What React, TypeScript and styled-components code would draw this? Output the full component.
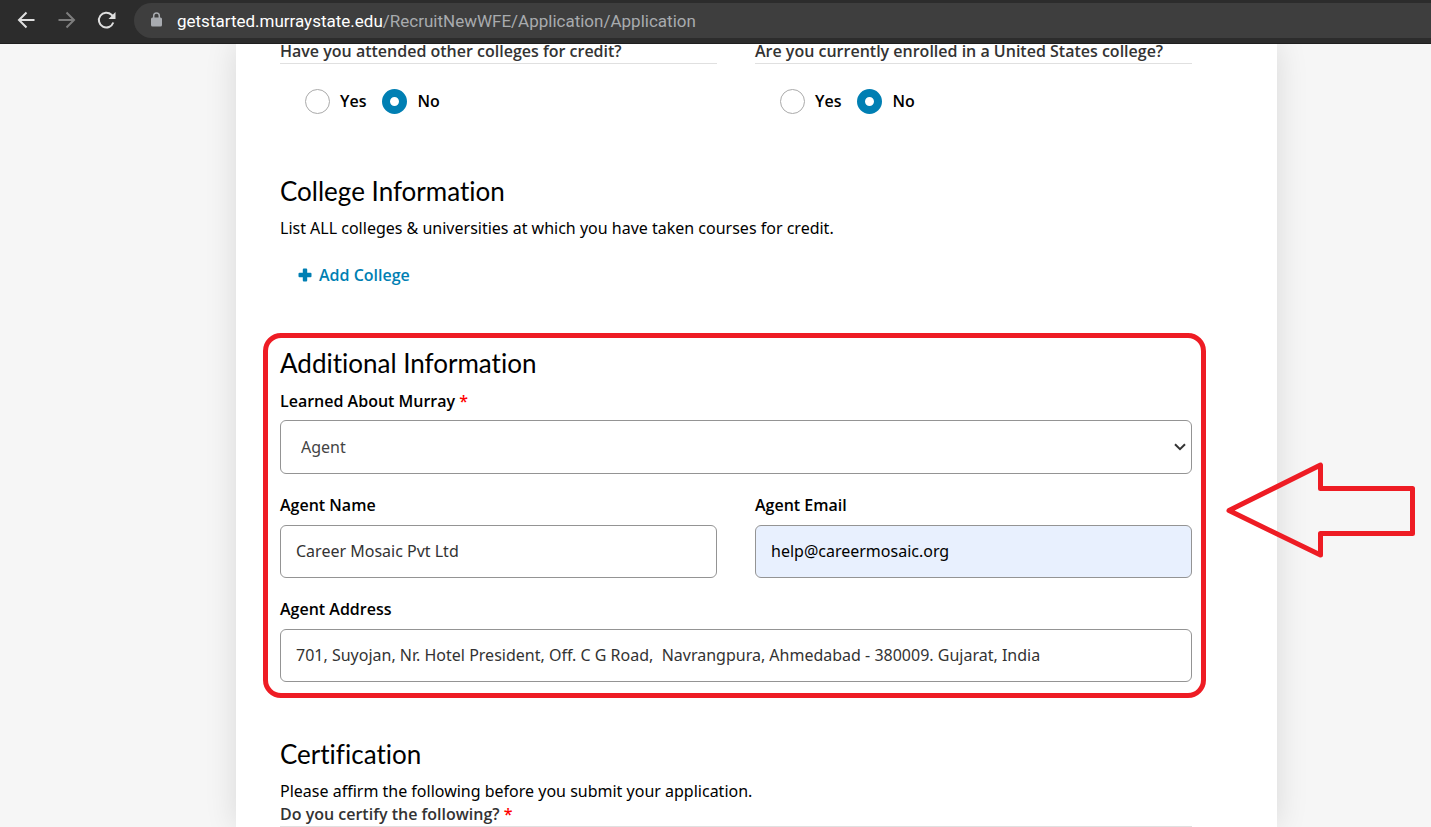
import React, { useState } from "react";
import styled, { createGlobalStyle } from "styled-components";

const GlobalStyle = createGlobalStyle`
  *, *::before, *::after { box-sizing: border-box; }
  body {
    margin: 0;
    background: #f6f6f6;
    color: #000;
    font-family: "Noto Sans", "Open Sans", sans-serif;
    font-size: 16px;
    line-height: 24px;
  }
`;

const labelFont = `
  font-family: "Open Sans", "Noto Sans", sans-serif;
  font-weight: 600;
`;

const Page = styled.div`
  display: flex;
  flex-direction: column;
  min-height: 100vh;
  overflow-x: hidden;
`;

const BrowserBar = styled.header`
  position: sticky;
  top: 0;
  z-index: 2;
  display: flex;
  align-items: center;
  height: 44px;
  padding: 0 0 3px 14px;
  background: #2c2c2c;
  border-bottom: 1px solid #1f1f1f;
`;

const NavButton = styled.button<{ $dim?: boolean }>`
  display: flex;
  align-items: center;
  justify-content: center;
  width: 24px;
  height: 24px;
  margin-right: 16px;
  padding: 0;
  border: 0;
  background: none;
  color: ${(p) => (p.$dim ? "#7d7d7d" : "#dfdfdf")};
`;

const AddressBar = styled.div`
  display: flex;
  flex: 1;
  align-items: center;
  height: 35px;
  padding-left: 16px;
  border-radius: 18px 0 0 18px;
  background: #3e3e3e;
`;

const Address = styled.div`
  margin-left: 14px;
  padding-top: 2px;
  color: #a8abae;
  font-family: Roboto, sans-serif;
  font-size: 17px;
  white-space: nowrap;
`;

const Host = styled.span`
  color: #fff;
`;

const Card = styled.main`
  flex: 1;
  margin: 0 154px 0 236px;
  padding: 0 85px 0 44px;
  background: #fff;
  box-shadow: 0 0 30px rgba(0, 0, 0, 0.12);
`;

const Columns = styled.div`
  display: grid;
  grid-template-columns: 1fr 1fr;
  column-gap: 38px;
`;

const Question = styled.fieldset`
  min-width: 0;
  margin: 0;
  padding: 0;
  border: 0;
`;

const Legend = styled.legend`
  ${labelFont}
  width: 100%;
  padding: 0 0 5px;
  border-bottom: 1px solid #e0e0e0;
  color: #333;
  line-height: 14px;
`;

const Options = styled.div`
  display: flex;
  gap: 16px;
  padding: 25px 0 0 25px;
`;

const Option = styled.label`
  ${labelFont}
  display: flex;
  align-items: flex-start;
  gap: 10px;
`;

const Radio = styled.input`
  appearance: none;
  width: 25px;
  height: 25px;
  margin: 0;
  border: 1px solid #aaa;
  border-radius: 50%;
  background: #fff;

  &:checked {
    border: 8px solid #007fb3;
  }
`;

const Section = styled.section<{ $gap: number }>`
  position: relative;
  margin-top: ${(p) => p.$gap}px;
`;

const Heading = styled.h2`
  margin: 0 0 9px;
  font-family: Lato, "Open Sans", sans-serif;
  font-size: 26px;
  font-variant-ligatures: none;
  font-weight: 400;
  line-height: 32px;
`;

const Text = styled.p`
  margin: 0;

  & + ${Question} {
    margin-top: 4px;
  }
`;

const AddButton = styled.button`
  display: flex;
  align-items: center;
  gap: 7px;
  margin: 23px 0 0 18px;
  padding: 0;
  border: 0;
  background: none;
  color: #007fb3;
  font-size: 16px;
  line-height: 24px;
  ${labelFont}
`;

const Field = styled.div`
  display: flex;
  flex-direction: column;
  margin-top: 19px;

  ${Heading} + & {
    margin-top: 10px;
  }
`;

const Label = styled.label`
  ${labelFont}
  margin-bottom: 7px;
`;

const Required = styled.span`
  color: #f00;
`;

const TextInput = styled.input<{ $filled?: boolean }>`
  width: 100%;
  height: 53px;
  margin: 1px 0 0;
  padding: 0 15px 2px;
  border: 1px solid #949494;
  border-radius: 6px;
  background: ${(p) => (p.$filled ? "#e8f0fe" : "#fff")};
  color: ${(p) => (p.$filled ? "#000" : "#333")};
  font: inherit;
`;

const SelectWrap = styled.div`
  display: grid;
  align-items: center;

  > * {
    grid-area: 1 / 1;
  }

  > svg {
    justify-self: end;
    margin-right: 6px;
    pointer-events: none;
  }
`;

const Select = styled.select`
  appearance: none;
  width: 100%;
  height: 54px;
  padding: 0 20px;
  border: 1px solid #949494;
  border-radius: 6px;
  background: #fff;
  color: #444;
  font: inherit;
`;

const Highlight = styled.div`
  position: absolute;
  inset: -14px -14px -16px -17px;
  border: 5px solid #ee1c24;
  border-radius: 18px;
  pointer-events: none;
`;

const Arrow = styled.svg`
  position: absolute;
  top: 114px;
  left: calc(100% + 33px);
  pointer-events: none;
`;

function YesNo({ name, question }: { name: string; question: string }) {
  const [value, setValue] = useState("No");
  return (
    <Question>
      <Legend>{question}</Legend>
      <Options>
        {["Yes", "No"].map((o) => (
          <Option key={o}>
            <Radio type="radio" name={name} checked={value === o} onChange={() => setValue(o)} />
            {o}
          </Option>
        ))}
      </Options>
    </Question>
  );
}

export default function App() {
  return (
    <Page>
      <GlobalStyle />
      <BrowserBar>
        <NavButton aria-label="Back">
          <svg width="24" height="24" viewBox="0 0 24 24" fill="none" stroke="currentColor" strokeWidth="2">
            <path d="M20.500 12H5.500M12.500 4.500L5 12l7.500 7.500" />
          </svg>
        </NavButton>
        <NavButton aria-label="Forward" $dim>
          <svg width="24" height="24" viewBox="0 0 24 24" fill="none" stroke="currentColor" strokeWidth="2">
            <path d="M4.500 12H19.500M12.500 4.500L20 12l-7.500 7.500" />
          </svg>
        </NavButton>
        <NavButton aria-label="Reload">
          <svg width="24" height="24" viewBox="0 0 24 24" fill="none" stroke="currentColor" strokeWidth="2">
            <path d="M19.300 14.500A7.400 7.400 0 1 1 17.500 6.800L19.500 8.800" />
            <path d="M21.500 4v7h-7z" fill="currentColor" stroke="none" />
          </svg>
        </NavButton>
        <AddressBar>
          <svg width="13" height="16" viewBox="0 0 13 16" fill="none">
            <rect x="1" y="5.500" width="11" height="9" rx="1.500" fill="#a8abb0" />
            <path d="M3.700 6V3.800a2.800 2.800 0 0 1 5.600 0V6" stroke="#a8abb0" strokeWidth="1.500" />
          </svg>
          <Address>
            <Host>getstarted.murraystate.edu</Host>/RecruitNewWFE/Application/Application
          </Address>
        </AddressBar>
      </BrowserBar>

      <Card>
        <Columns>
          <YesNo name="attended" question="Have you attended other colleges for credit?" />
          <YesNo name="enrolled" question="Are you currently enrolled in a United States college?" />
        </Columns>

        <Section $gap={61}>
          <Heading>College Information</Heading>
          <Text>List ALL colleges &amp; universities at which you have taken courses for credit.</Text>
          <AddButton type="button">
            <svg width="14" height="14" viewBox="0 0 14 14" fill="currentColor">
              <path d="M5.800 0.500h2.400a1 1 0 0 1 1 1v3.300h3.300a1 1 0 0 1 1 1v2.400a1 1 0 0 1-1 1H9.200v3.300a1 1 0 0 1-1 1H5.800a1 1 0 0 1-1-1V9.200H1.500a1 1 0 0 1-1-1V5.800a1 1 0 0 1 1-1h3.300V1.500a1 1 0 0 1 1-1z" />
            </svg>
            Add College
          </AddButton>
        </Section>

        <Section $gap={60}>
          <Heading>Additional Information</Heading>
          <Field>
            <Label htmlFor="learned">
              Learned About Murray <Required>*</Required>
            </Label>
            <SelectWrap>
              <Select id="learned" defaultValue="Agent">
                <option>Agent</option>
              </Select>
              <svg width="12" height="8" viewBox="0 0 12 8" fill="none" stroke="#333" strokeWidth="2">
                <path d="M1 1.200l5 5 5-5" />
              </svg>
            </SelectWrap>
          </Field>
          <Columns>
            <Field>
              <Label htmlFor="agent-name">Agent Name</Label>
              <TextInput id="agent-name" defaultValue="Career Mosaic Pvt Ltd" />
            </Field>
            <Field>
              <Label htmlFor="agent-email">Agent Email</Label>
              <TextInput id="agent-email" type="email" $filled defaultValue="help@careermosaic.org" />
            </Field>
          </Columns>
          <Field>
            <Label htmlFor="agent-address">Agent Address</Label>
            <TextInput
              id="agent-address"
              defaultValue="701, Suyojan, Nr. Hotel President, Off. C G Road,  Navrangpura, Ahmedabad - 380009. Gujarat, India"
            />
          </Field>
          <Highlight />
          <Arrow width="192" height="98" viewBox="0 0 192 98" fill="none" stroke="#ee1c24" strokeWidth="5" strokeLinejoin="round">
            <path d="M4 49.500L95.500 4v23.500h92v45h-92V94z" />
          </Arrow>
        </Section>

        <Section $gap={56}>
          <Heading>Certification</Heading>
          <Text>Please affirm the following before you submit your application.</Text>
          <Question>
            <Legend>
              Do you certify the following? <Required>*</Required>
            </Legend>
          </Question>
        </Section>
      </Card>
    </Page>
  );
}
